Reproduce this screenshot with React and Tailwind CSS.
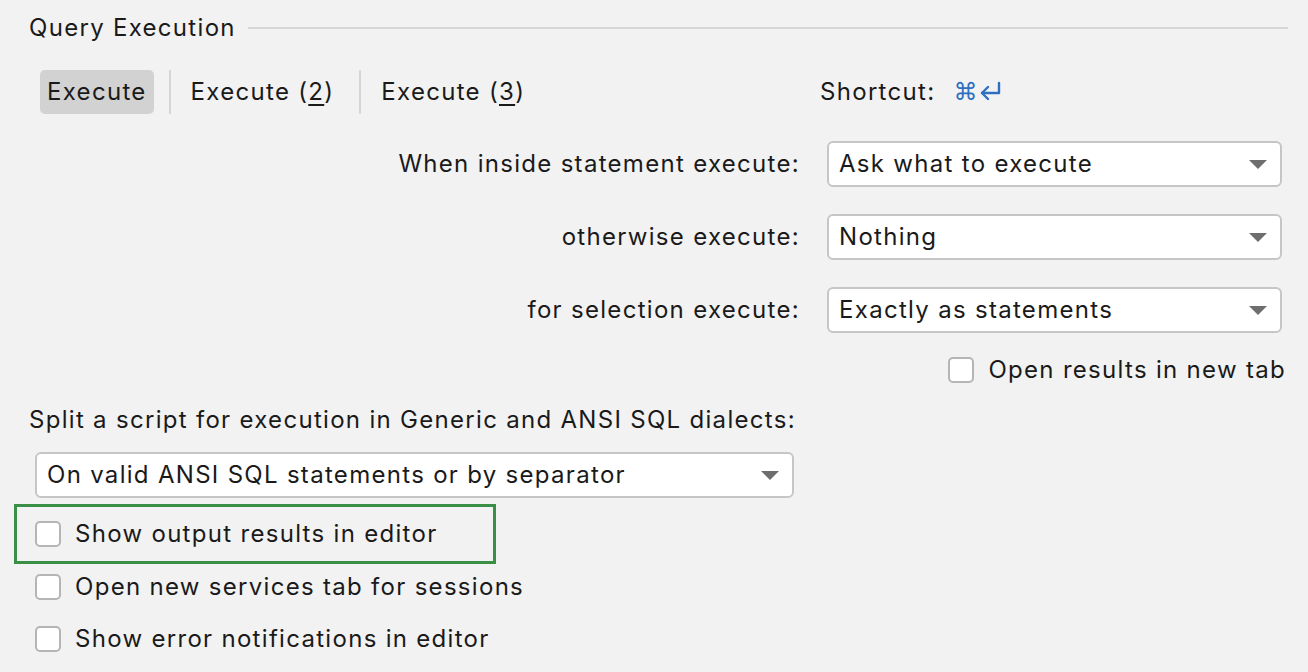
import React from "react";

const font = { fontFamily: "Inter, 'Noto Sans', sans-serif" };

const Arrow = () => (
  <svg width="18" height="10" viewBox="0 0 18 10" className="absolute right-[13px] top-1/2 -translate-y-1/2">
    <path d="M0 1 L18 1 L9 10 Z" fill="#6e6e6e" />
  </svg>
);

const Select = ({ value, className = "" }) => (
  <div
    className={`relative h-[46px] bg-white border-2 border-[#c6c6c6] rounded-[6px] flex items-center pl-[10px] text-[24px] text-[#1a1a1a] ${className}`}
  >
    {value}
    <Arrow />
  </div>
);

const Checkbox = () => (
  <div className="w-[26px] h-[26px] bg-white border-2 border-[#b5b5b5] rounded-[5px] shrink-0" />
);

const CheckRow = ({ label, className = "" }) => (
  <div className={`flex items-center gap-[14px] text-[24px] text-[#1a1a1a] ${className}`}>
    <Checkbox />
    <span>{label}</span>
  </div>
);

const ReturnIcon = () => (
  <svg width="24" height="22" viewBox="0 0 24 22" fill="none" stroke="#2f6fc0" strokeWidth="2.4" strokeLinecap="round" strokeLinejoin="round">
    <path d="M20 2 V12 H3" />
    <path d="M9 6 L3 12 L9 18" />
  </svg>
);

export default function App() {
  const rows = [
    ["When inside statement execute:", "Ask what to execute"],
    ["otherwise execute:", "Nothing"],
    ["for selection execute:", "Exactly as statements"],
  ];

  return (
    <div style={font} className="w-[1308px] h-[672px] bg-[#f2f2f2] overflow-hidden text-[#1a1a1a] tracking-[1.3px]">
      {/* title */}
      <div className="flex items-center pl-[29px] pr-[20px] pt-[11px] h-[44px]">
        <span className="text-[24px]">Query Execution</span>
        <div className="flex-1 h-[2px] bg-[#d6d6d6] ml-[12px]" />
      </div>

      {/* tabs + shortcut */}
      <div className="flex items-center mt-[26px] h-[44px]">
        <div className="flex items-center w-[780px] pl-[40px] text-[24px]">
          <div className="h-[44px] px-[7px] flex items-center bg-[#d2d2d2] rounded-[5px]">Execute</div>
          <div className="w-[2px] h-[44px] bg-[#d6d6d6] ml-[15px] mr-[20px]" />
          <div>
            Execute (<span className="underline underline-offset-4">2</span>)
          </div>
          <div className="w-[2px] h-[44px] bg-[#d6d6d6] ml-[25px] mr-[20px]" />
          <div>
            Execute (<span className="underline underline-offset-4">3</span>)
          </div>
        </div>
        <div className="flex items-center ml-[40px] text-[24px]">
          <span>Shortcut:</span>
          <span className="ml-[18px] text-[#2f6fc0] text-[24px] leading-none" style={{ fontFamily: "'DejaVu Sans', sans-serif" }}>
            ⌘
          </span>
          <ReturnIcon />
        </div>
      </div>

      {/* selects */}
      <div className="mt-[27px] flex flex-col gap-[27px]">
        {rows.map(([label, value]) => (
          <div key={label} className="flex items-center">
            <div className="w-[800px] text-right text-[24px]">{label}</div>
            <Select value={value} className="ml-[27px] w-[455px]" />
          </div>
        ))}
      </div>

      <div className="flex justify-end pr-[22px] mt-[19px]">
        <CheckRow label="Open results in new tab" />
      </div>

      <div className="pl-[29px] mt-[14px] text-[24px]">
        Split a script for execution in Generic and ANSI SQL dialects:
      </div>

      <div className="pl-[35px] mt-[14px]">
        <Select value="On valid ANSI SQL statements or by separator" className="w-[759px]" />
      </div>

      <div className="ml-[14px] mt-[6px] w-[482px] h-[60px] border-[3px] border-[#3a8f47] flex items-center pl-[18px]">
        <CheckRow label="Show output results in editor" />
      </div>

      <CheckRow label="Open new services tab for sessions" className="pl-[35px] mt-[5px]" />
      <CheckRow label="Show error notifications in editor" className="pl-[35px] mt-[16px]" />
    </div>
  );
}
